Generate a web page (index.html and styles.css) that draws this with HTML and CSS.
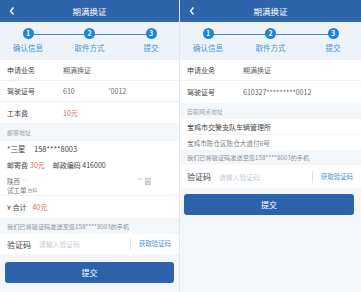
FILE: index.html
```html
<!DOCTYPE html>
<html lang="zh-CN">
<head>
    <meta charset="utf-8">
    <title>期满换证</title>
    <link rel="stylesheet" href="styles.css">
</head>
<body>
<div class="screens">

    <!-- left screen: mail delivery -->
    <section class="phone phone-left">
        <header class="nav">
            <svg class="back" width="8" height="10" viewBox="0 0 8 10"><polyline points="5.5,1.5 2.5,5 5.5,8.5" fill="none" stroke="#fff" stroke-width="1.4"/></svg>
            <h1>期满换证</h1>
            <span></span>
        </header>
        <div class="steps">
            <div class="step"><span class="dot">1</span><span class="step-name">确认信息</span></div>
            <div class="step"><span class="dot">2</span><span class="step-name">取件方式</span></div>
            <div class="step"><span class="dot">3</span><span class="step-name">提交</span></div>
        </div>
        <div class="row"><span class="label">申请业务</span><span class="value">期满换证</span></div>
        <div class="row"><span class="label">驾驶证号</span><span class="value">610</span><span class="value masked">'0012</span></div>
        <div class="row row-last"><span class="label">工本费</span><span class="value red">10元</span></div>

        <div class="band">邮寄地址</div>
        <div class="contact"><span class="name">*三星</span><span>158****8003</span></div>
        <div class="fees"><span>邮寄费</span><span class="red fee-val">30元</span><span>邮政编码 416000</span></div>
        <div class="address">
            <div class="addr-line"><span>陕西</span><span class="smudge">⁻⁻</span><span class="addr-end">''' 圆</span></div>
            <div class="addr-line"><span>试工单</span><span class="tiny">由料</span></div>
        </div>
        <div class="total"><span>¥ 合计</span><span class="red">40元</span></div>

        <div class="band band-sms">我们已将验证码发送至您158****8003的手机</div>
        <div class="code-row">
            <span class="code-label">验证码</span>
            <span class="code-input">请输入验证码</span>
            <span class="code-btn">获取验证码</span>
        </div>
        <button class="submit submit-left">提交</button>
    </section>

    <!-- right screen: self pick-up -->
    <section class="phone phone-right">
        <header class="nav">
            <svg class="back" width="8" height="10" viewBox="0 0 8 10"><polyline points="5.5,1.5 2.5,5 5.5,8.5" fill="none" stroke="#fff" stroke-width="1.4"/></svg>
            <h1>期满换证</h1>
            <span></span>
        </header>
        <div class="steps">
            <div class="step"><span class="dot">1</span><span class="step-name">确认信息</span></div>
            <div class="step"><span class="dot">2</span><span class="step-name">取件方式</span></div>
            <div class="step"><span class="dot">3</span><span class="step-name">提交</span></div>
        </div>
        <div class="row"><span class="label">申请业务</span><span class="value">期满换证</span></div>
        <div class="row row-tall"><span class="label">驾驶证号</span><span class="value">610327*********0012</span></div>

        <div class="band band-short">自取网点地址</div>
        <div class="office">宝鸡市交警支队车辆管理所</div>
        <div class="office-addr">宝鸡市陈仓区陈仓大道付6号</div>

        <div class="band band-sms2">我们已将验证码发送至您158****8003的手机</div>
        <div class="code-row code-row-tall">
            <span class="code-label">验证码</span>
            <span class="code-input">请输入验证码</span>
            <span class="code-btn">获取验证码</span>
        </div>
        <button class="submit submit-right">提交</button>
    </section>

</div>
</body>
</html>
```

FILE: styles.css
```css
* {
    box-sizing: border-box;
    margin: 0;
    padding: 0;
}

body {
    margin: 0;
    background: #f3f6f9;
    font-family: "Noto Sans CJK SC", "Noto Sans", sans-serif;
    color: #444;
}

.screens {
    display: flex;
    gap: 1px;
    height: 292px;
    background: #e2e8ef;
}

.phone {
    display: flex;
    flex-direction: column;
    background: #f4f7fa;
}

.phone-left { width: 179px; }
.phone-right { width: 181px; }

/* top bar */
.nav {
    height: 22px;
    background: #2e64a9;
    display: grid;
    grid-template-columns: 20px 1fr 20px;
    align-items: center;
}

.nav .back {
    margin-left: 8px;
}

.nav h1 {
    font-size: 8.5px;
    font-weight: normal;
    color: #fff;
    text-align: center;
    line-height: 10px;
}

/* progress steps */
.steps {
    position: relative;
    height: 38px;
    background: #edf3f9;
    display: flex;
    justify-content: space-between;
    padding: 6px 12px 0;
}

.steps::before {
    content: "";
    position: absolute;
    left: 28px;
    right: 28px;
    top: 11.5px;
    height: 1px;
    background: #3a8dd6;
}

.step {
    position: relative;
    z-index: 1;
    width: 32px;
    display: flex;
    flex-direction: column;
    align-items: center;
    gap: 4px;
}

.dot {
    width: 11px;
    height: 11px;
    border-radius: 50%;
    background: #1c84dc;
    color: #fff;
    font-size: 7px;
    line-height: 11px;
    text-align: center;
    font-weight: bold;
}

.step-name {
    font-size: 7.5px;
    line-height: 10px;
    color: #4a93d6;
    white-space: nowrap;
}

/* info rows */
.row {
    height: 21px;
    display: flex;
    align-items: center;
    padding-left: 7px;
    background: #fff;
    border-bottom: 1px solid #eff2f5;
    font-size: 7px;
}

.row-last { border-bottom: none; }
.row-tall { height: 22px; border-bottom: none; }

.label {
    width: 56px;
    color: #444;
}

.value { color: #666; }
.masked { margin-left: 34px; }

.red { color: #e5605c; }

/* grey section headers */
.band {
    height: 18px;
    display: flex;
    align-items: center;
    padding-left: 7px;
    font-size: 6px;
    color: #a0a4aa;
    background: #f4f7fa;
}

.band-sms { height: 16px; font-size: 6.2px; color: #8e9298; }
.band-short { height: 16px; }
.band-sms2 { height: 15px; font-size: 6.2px; color: #8e9298; }

/* mail address block */
.contact {
    height: 15px;
    display: flex;
    align-items: center;
    padding-left: 7px;
    background: #fff;
    font-size: 7.5px;
    color: #444;
}

.contact .name { width: 27px; }

.fees {
    height: 18px;
    display: flex;
    align-items: center;
    padding-left: 7px;
    background: #fff;
    font-size: 7px;
}

.fee-val { margin: 0 8px 0 2px; }

.address {
    height: 22px;
    padding: 2px 0 0 7px;
    background: #fff;
    border-bottom: 1px solid #eff2f5;
    font-size: 6.5px;
    color: #777;
}

.addr-line {
    display: flex;
    align-items: center;
    height: 9px;
}

.smudge { color: #ccc; margin-left: 2px; }
.addr-end { margin-left: auto; margin-right: 28px; color: #aaa; }
.tiny { font-size: 5px; color: #999; margin-left: 1px; }

.total {
    height: 22px;
    display: flex;
    align-items: center;
    gap: 6px;
    padding-left: 7px;
    background: #fff;
    font-size: 7px;
}

/* pick-up office */
.office {
    height: 16px;
    display: flex;
    align-items: center;
    padding-left: 7px;
    background: #fff;
    border-bottom: 1px solid #eff2f5;
    font-size: 7px;
    color: #444;
}

.office-addr {
    height: 15px;
    display: flex;
    align-items: center;
    padding-left: 7px;
    background: #fff;
    font-size: 6.6px;
    color: #808488;
}

/* sms code */
.code-row {
    height: 20px;
    display: flex;
    align-items: center;
    padding: 0 8px 0 7px;
    background: #fff;
}

.code-row-tall { height: 23px; }

.code-label {
    width: 32px;
    font-size: 8px;
    color: #444;
}

.code-input {
    flex: 1;
    font-size: 6.8px;
    color: #c6cbd2;
}

.code-btn {
    height: 12px;
    line-height: 12px;
    padding-left: 8px;
    border-left: 1px solid #dde3ea;
    font-size: 6.4px;
    color: #4a93d6;
}

.submit {
    height: 20.5px;
    margin: 8px 5px 0;
    border: none;
    border-radius: 3px;
    background: #2c62a9;
    color: #fff;
    font-family: inherit;
    font-size: 8px;
}

.submit-right { margin: 6px 7px 0 4px; height: 21px; }
```
